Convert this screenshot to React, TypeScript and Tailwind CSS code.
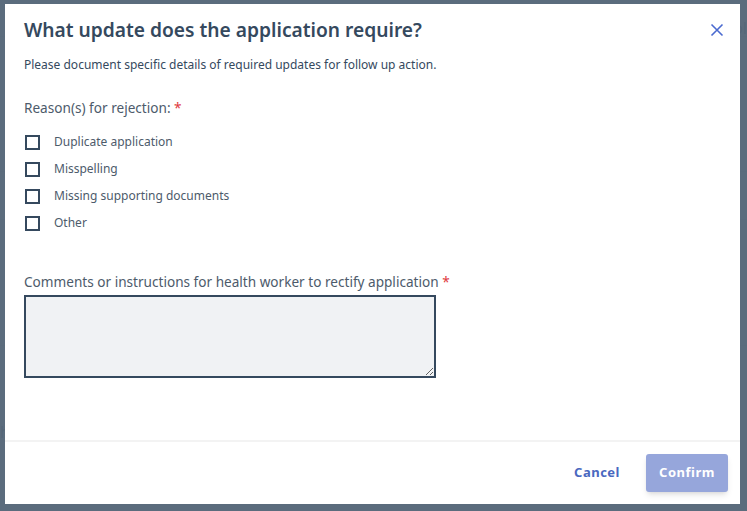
import { useState } from "react"

const reasons = [
  "Duplicate application",
  "Misspelling",
  "Missing supporting documents",
  "Other",
]

function Background() {
  return (
    <div className="absolute inset-0 bg-white">
      <div className="h-[37px] border-b border-gray-300" />
      <div className="h-[135px] border-b border-gray-300" />
      <div className="h-[48px] border-b border-gray-300" />
      <div className="h-[126px] border-b border-gray-300" />
      <div className="pt-[74px] pl-0 text-gray-700 text-[16px]">h</div>
      <div className="absolute right-0 top-[16px] text-[16px] text-gray-700">ol</div>
    </div>
  )
}

export default function App() {
  const [checked, setChecked] = useState<boolean[]>([false, false, false, false])

  const toggle = (i: number) => {
    setChecked((prev) => prev.map((v, idx) => (idx === i ? !v : v)))
  }

  return (
    <main
      className="relative w-[747px] h-[511px] overflow-hidden"
      style={{ fontFamily: '"Noto Sans", "Open Sans", sans-serif' }}
    >
      <Background />
      <div className="absolute inset-0 bg-[#566779]/[0.97]" />

      <div className="absolute left-[5px] top-[4px] w-[735px] h-[500px] bg-white flex flex-col">
        <div className="flex items-start justify-between pl-[19px] pr-[16px] pt-[12px]">
          <h1 className="text-[19.2px] leading-[28px] font-semibold text-[#35495e]">
            What update does the application require?
          </h1>
          <button className="mt-[7px] text-[#4a6ad0]">
            <svg width="14" height="14" viewBox="0 0 14 14" fill="none">
              <path d="M1.5 1.5L12.5 12.5M12.5 1.5L1.5 12.5" stroke="currentColor" strokeWidth="1.6" />
            </svg>
          </button>
        </div>

        <div className="flex-1 pl-[19px] pr-[24px]">
          <p className="mt-[12px] text-[12px] leading-[18px] text-[#35495e]">
            Please document specific details of required updates for follow up action.
          </p>

          <p className="mt-[24px] text-[13.6px] leading-[20px] text-[#4d5b6b]">
            Reason(s) for rejection: <span className="text-[#e0393e]">*</span>
          </p>

          <div className="mt-[15px] flex flex-col gap-[9px]">
            {reasons.map((r, i) => (
              <label key={r} className="flex items-center gap-[14px] h-[18px] cursor-pointer">
                <span
                  onClick={() => toggle(i)}
                  className={`ml-[1px] w-[15px] h-[15px] border-2 border-[#35495e] ${
                    checked[i] ? "bg-[#35495e]" : "bg-white"
                  }`}
                />
                <span className="text-[12px] leading-[18px] text-[#4d5b6b]">{r}</span>
              </label>
            ))}
          </div>

          <p className="mt-[40px] text-[13.6px] leading-[20px] text-[#4d5b6b]">
            Comments or instructions for health worker to rectify application{" "}
            <span className="text-[#e0393e]">*</span>
          </p>
          <textarea className="mt-[3px] block w-[412px] h-[83px] bg-[#f0f2f4] border-2 border-[#35495e] outline-none p-2 text-[14px]" />
        </div>

        <div className="border-t-2 border-[#f3f3f3] h-[64px] flex items-center justify-end gap-[26px] pr-[12px]">
          <button className="text-[13px] font-bold tracking-[0.5px] text-[#4a68c0]">Cancel</button>
          <button className="w-[82px] h-[38px] rounded-[3px] bg-[#96a6db] text-white text-[13px] font-bold tracking-[0.5px] shadow-md">
            Confirm
          </button>
        </div>
      </div>
    </main>
  )
}
